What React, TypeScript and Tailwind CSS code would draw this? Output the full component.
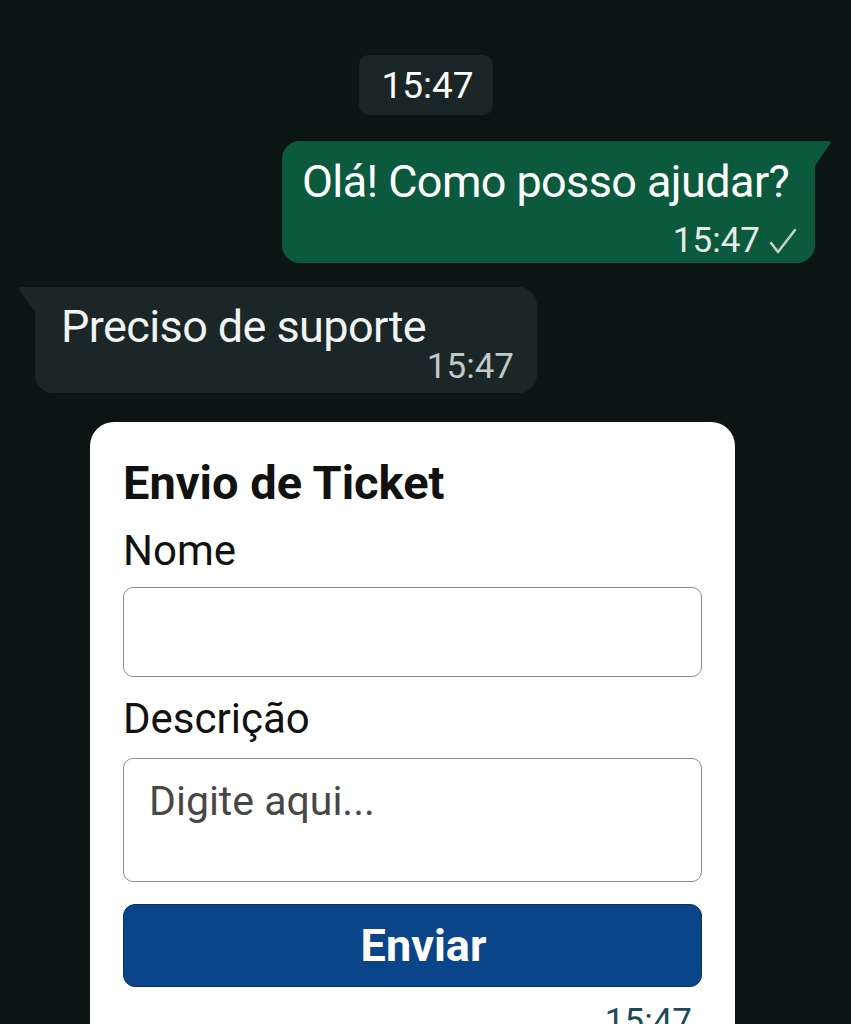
import React from 'react';

const App = () => {
  return (
    <div className="h-[1024px] w-full overflow-hidden bg-[#0b1514] font-['Roboto',sans-serif]">
      {/* Date pill */}
      <div className="flex justify-center pt-[55px]">
        <div className="flex h-[60px] w-[134px] items-center justify-center rounded-[10px] bg-[#1a2525] pl-[4px] text-[37px] leading-none text-white">
          15:47
        </div>
      </div>

      {/* Outgoing message */}
      <div className="mt-[26px] flex justify-end pr-[36px]">
        <div className="relative h-[122px] w-[533px] rounded-[18px] rounded-tr-none bg-[#0b5a3d] pl-[20px] pr-[18px] pt-[17px]">
          <svg className="absolute right-[-17px] top-0" width="18" height="26" viewBox="0 0 18 26">
            <path d="M0 0 H14 Q18 0 16 3 L0 26 Z" fill="#0b5a3d" />
          </svg>
          <div className="text-[45px] leading-[48px] tracking-[-0.6px] text-white">Olá! Como posso ajudar?</div>
          <div className="mt-[17px] flex items-center justify-end gap-[9px] text-[35px] leading-none text-[#e6ece9]">
            <span>15:47</span>
            <svg width="28" height="26" viewBox="0 0 28 26" fill="none">
              <path d="M2 15 L9 24 L26 2" stroke="#c9cfcc" strokeWidth="2.5" strokeLinecap="round" strokeLinejoin="round" />
            </svg>
          </div>
        </div>
      </div>

      {/* Incoming message */}
      <div className="mt-[24px] flex pl-[35px]">
        <div className="relative h-[106px] w-[502px] rounded-[18px] rounded-tl-none bg-[#1b2626] pl-[26px] pr-[23px] pt-[16px]">
          <svg className="absolute left-[-18px] top-0" width="19" height="26" viewBox="0 0 19 26">
            <path d="M19 0 H4 Q0 0 2 3 L19 26 Z" fill="#1b2626" />
          </svg>
          <div className="text-[45px] leading-[48px] tracking-[-0.6px] text-[#f2f4f4]">Preciso de suporte</div>
          <div className="-mt-[2px] text-right text-[35px] leading-none text-[#c3c8c8]">15:47</div>
        </div>
      </div>

      {/* Ticket card */}
      <div className="ml-[90px] mt-[29px] w-[645px] rounded-t-[24px] bg-white px-[33px] pb-[20px] pt-[35px]">
        <h2 className="text-[47px] font-bold leading-[52px] text-[#111]">Envio de Ticket</h2>
        <label className="mt-[18px] block text-[42px] leading-[48px] text-[#111]">Nome</label>
        <div className="mt-[12px] h-[90px] w-full rounded-[10px] border border-[#8d8d8d] bg-white" />
        <label className="mt-[18px] block text-[42px] leading-[48px] text-[#111]">Descrição</label>
        <div className="mt-[15px] h-[124px] w-full rounded-[10px] border border-[#8d8d8d] bg-white px-[25px] pt-[18px] text-[41px] leading-[48px] text-[#474747]">
          Digite aqui...
        </div>
        <button className="mt-[22px] flex h-[83px] w-full items-center justify-center rounded-[12px] border border-[#072f63] bg-[#0b4589] pl-[22px] text-[45px] font-bold text-white">
          Enviar
        </button>
        <div className="mt-[17px] pr-[10px] text-right text-[35px] leading-none text-[#1d4a5a]">15:47</div>
      </div>
    </div>
  );
};

export default App;
